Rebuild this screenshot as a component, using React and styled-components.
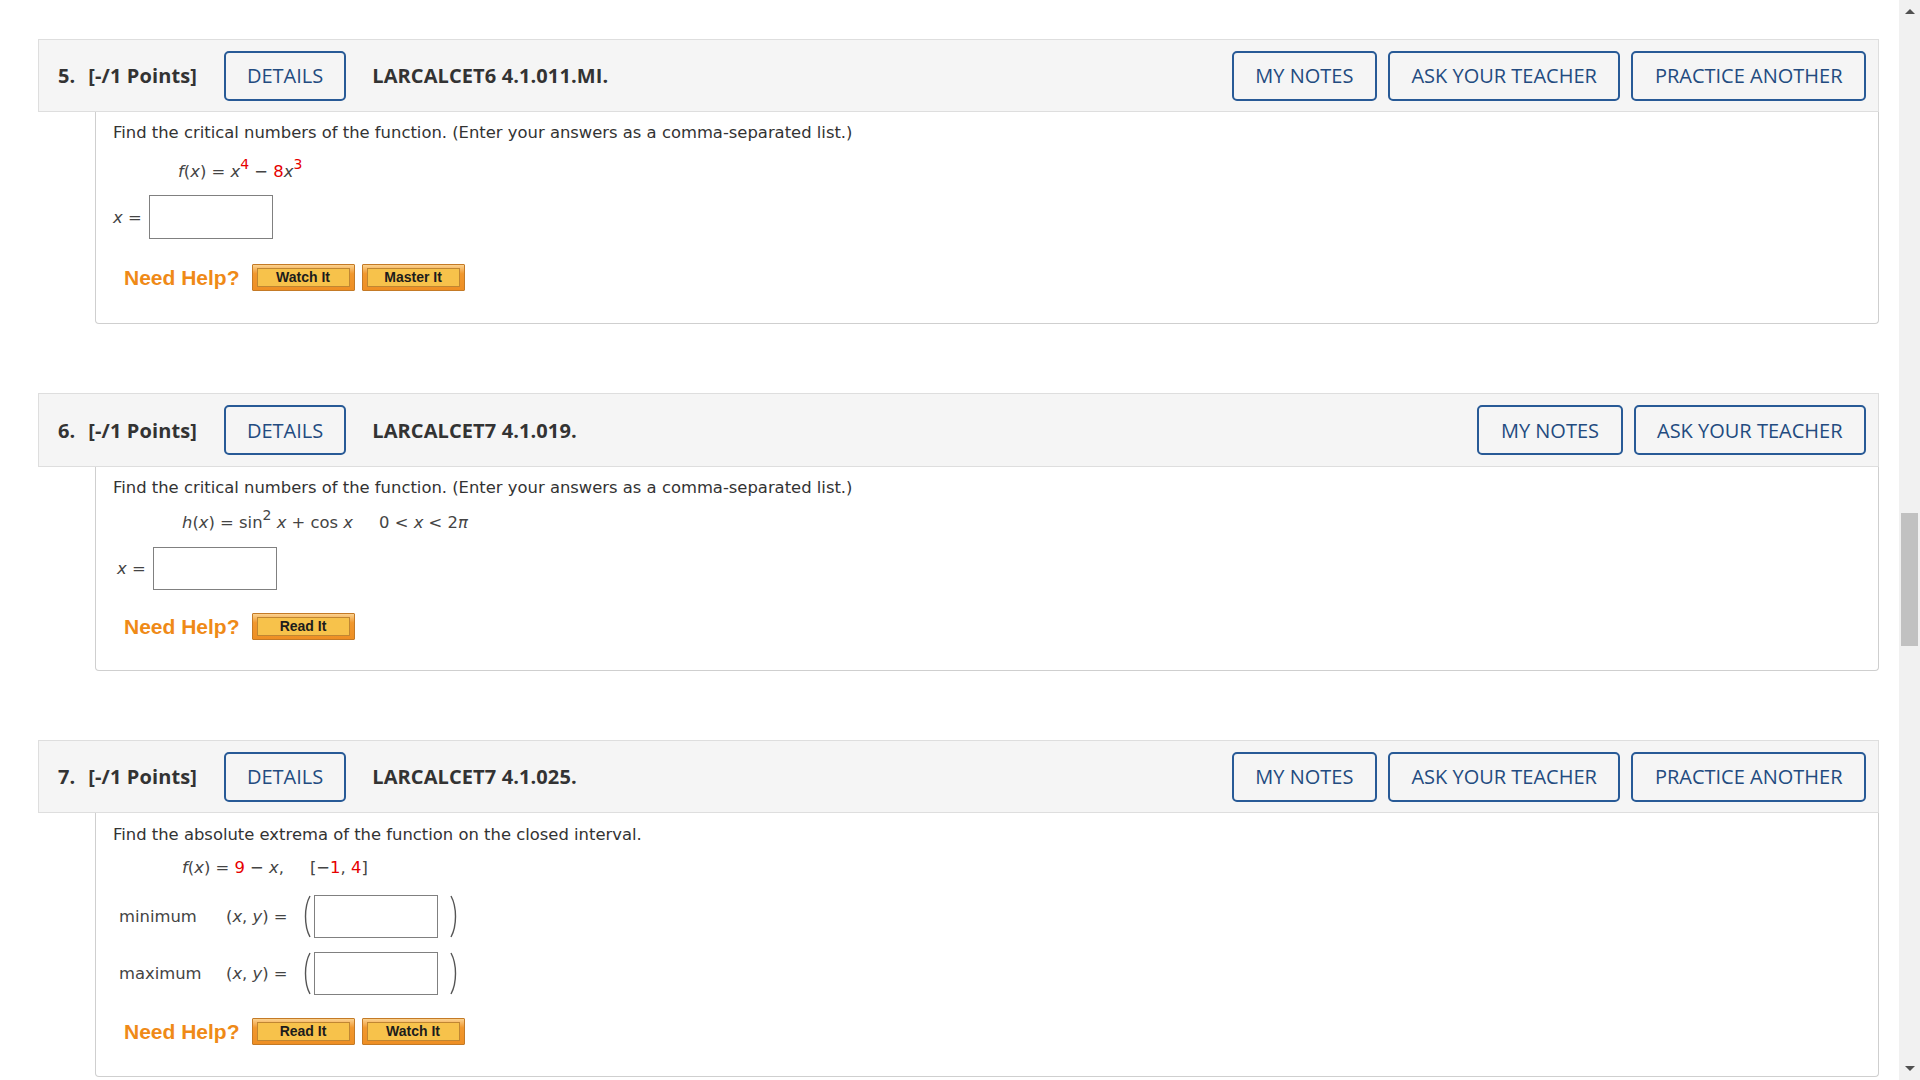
import React from 'react';
import styled, { createGlobalStyle } from 'styled-components';

const GlobalStyle = createGlobalStyle`
  html, body {
    margin: 0;
    padding: 0;
    height: 100%;
    overflow: hidden;
    background: #fff;
  }
  #root { height: 100%; }
`;

const Screen = styled.div`
  display: flex;
  height: 1080px;
  overflow: hidden;
`;

const Main = styled.div`
  flex: 1;
  display: flex;
  flex-direction: column;
  gap: 69px;
  padding: 39px 20px 0 38px;
  min-width: 0;
`;

const Scrollbar = styled.div`
  width: 21px;
  flex: none;
  display: flex;
  flex-direction: column;
  align-items: center;
  background: #f1f1f1;
`;

const Arrow = styled.div`
  width: 0;
  height: 0;
  border-left: 5px solid transparent;
  border-right: 5px solid transparent;
  ${p => (p.down
    ? 'border-top: 5px solid #505050; margin-top: auto; margin-bottom: 9px;'
    : 'border-bottom: 5px solid #505050; margin-top: 9px;')}
`;

const Thumb = styled.div`
  width: 17px;
  height: 133px;
  margin-top: 499px;
  background: #c1c1c1;
`;

const QuestionWrap = styled.section`
  display: flex;
  flex-direction: column;
`;

const Header = styled.div`
  display: flex;
  align-items: center;
  height: ${p => p.tall ? 74 : 73}px;
  box-sizing: border-box;
  padding: 0 12px 0 19px;
  background: #f5f5f5;
  border: 1px solid #dedede;
  font-family: "Open Sans", "Liberation Sans", sans-serif;
  font-size: 20px;
  color: #333;
`;

const Points = styled.div`
  font-weight: 700;
  white-space: nowrap;
  letter-spacing: 0.1px;
  span { margin-right: 13px; }
`;

const Code = styled.div`
  font-weight: 700;
  margin-left: 26px;
  white-space: nowrap;
  letter-spacing: 0.1px;
`;

const OutlineButton = styled.button`
  height: 50px;
  box-sizing: border-box;
  padding: 0 ${p => p.spaced ? 21 : 21.5}px;
  margin-left: ${p => p.spaced ? 27 : 0}px;
  background: transparent;
  border: 2px solid #285a96;
  border-radius: 5px;
  font-family: "Open Sans", "Liberation Sans", sans-serif;
  font-size: 20px;
  color: #234b80;
  white-space: nowrap;
  cursor: pointer;
`;

const Actions = styled.div`
  margin-left: auto;
  display: flex;
  gap: 11px;
`;

const Body = styled.div`
  margin-left: 57px;
  padding: ${p => p.top}px 17px ${p => p.bottom}px;
  border: 1px solid #cfcfcf;
  border-top: none;
  border-radius: 0 0 4px 4px;
  font-family: "DejaVu Sans", Verdana, sans-serif;
  font-size: 16.4px;
  color: #333;
`;

const Prompt = styled.div`
  line-height: 20px;
`;

const Formula = styled.div`
  margin-top: ${p => p.gap}px;
  margin-left: ${p => p.indent}px;
  height: 20px;
  line-height: 20px;
  color: #444;
  i { font-style: italic; }
  sup {
    font-size: 14px;
    line-height: 0;
    vertical-align: 8px;
  }
`;

const Red = styled.span`
  color: #e60000;
`;

const Gap = styled.span`
  display: inline-block;
  width: ${p => p.w}px;
`;

const AnswerRow = styled.div`
  display: flex;
  align-items: center;
  margin-top: ${p => p.gap}px;
  margin-left: ${p => p.indent || 0}px;
  color: #444;
`;

const VarLabel = styled.span`
  margin-right: 7px;
`;

const AnswerBox = styled.input`
  width: 124px;
  height: ${p => p.h || 44}px;
  box-sizing: border-box;
  border: 1px solid #808080;
  background: #fff;
  margin: 0;
  padding: 0 4px;
`;

const RowLabel = styled.span`
  width: 107px;
  flex: none;
`;

const PairLabel = styled.span`
  width: 76px;
  flex: none;
`;

const Paren = styled.svg`
  flex: none;
  display: block;
  margin: ${p => p.right ? '0 0 0 11px' : '0 2px 0 0'};
`;

const HelpRow = styled.div`
  display: flex;
  align-items: center;
  margin-top: ${p => p.gap}px;
  margin-left: 11px;
  gap: 7px;
`;

const NeedHelp = styled.span`
  font-family: "Liberation Sans", Arial, sans-serif;
  font-weight: 700;
  font-size: 21px;
  color: #ef8a17;
  margin-right: 5px;
`;

const HelpButton = styled.button`
  width: 103px;
  height: 27px;
  box-sizing: border-box;
  padding: 3px 4px;
  border: 1px solid #c47a26;
  border-radius: 1px;
  background: linear-gradient(#fbd290, #f1982e 35%, #ee8f24);
  cursor: pointer;
  span {
    display: block;
    height: 100%;
    box-sizing: border-box;
    border: 1px solid #c08632;
    background: #f7c24b;
    font-family: "Liberation Sans", Arial, sans-serif;
    font-weight: 700;
    font-size: 14px;
    line-height: 17px;
    color: #1c1c1c;
  }
`;

const BigParen = ({ right }) => (
  <Paren right={right} width="10" height="43" viewBox="0 0 10 43">
    <path
      d={right ? 'M2 1 C8 12 8 31 2 42' : 'M8 1 C2 12 2 31 8 42'}
      stroke="#555"
      strokeWidth="1.4"
      fill="none"
    />
  </Paren>
);

const Help = ({ gap, items }) => (
  <HelpRow gap={gap}>
    <NeedHelp>Need Help?</NeedHelp>
    {items.map(label => (
      <HelpButton key={label}><span>{label}</span></HelpButton>
    ))}
  </HelpRow>
);

const Question = ({ num, code, practice, tall, top, bottom, children }) => (
  <QuestionWrap>
    <Header tall={tall}>
      <Points><span>{num}.</span>[-/1 Points]</Points>
      <OutlineButton spaced>DETAILS</OutlineButton>
      <Code>{code}</Code>
      <Actions>
        <OutlineButton>MY NOTES</OutlineButton>
        <OutlineButton>ASK YOUR TEACHER</OutlineButton>
        {practice && <OutlineButton>PRACTICE ANOTHER</OutlineButton>}
      </Actions>
    </Header>
    <Body top={top} bottom={bottom}>{children}</Body>
  </QuestionWrap>
);

const ExtremaRow = ({ label, gap }) => (
  <AnswerRow gap={gap} indent={6}>
    <RowLabel>{label}</RowLabel>
    <PairLabel>(<i>x</i>, <i>y</i>) =</PairLabel>
    <BigParen />
    <AnswerBox h={43} />
    <BigParen right />
  </AnswerRow>
);

export default function App() {
  return (
    <Screen>
      <GlobalStyle />
      <Main>
        <Question num={5} code="LARCALCET6 4.1.011.MI." practice top={11} bottom={32}>
          <Prompt>Find the critical numbers of the function. (Enter your answers as a comma-separated list.)</Prompt>
          <Formula gap={19} indent={65}>
            <i>f</i>(<i>x</i>) = <i>x</i><sup><Red>4</Red></sup> − <Red>8</Red><i>x</i><sup><Red>3</Red></sup>
          </Formula>
          <AnswerRow gap={13}>
            <VarLabel><i>x</i> =</VarLabel>
            <AnswerBox />
          </AnswerRow>
          <Help gap={25} items={['Watch It', 'Master It']} />
        </Question>

        <Question num={6} code="LARCALCET7 4.1.019." tall top={11} bottom={30}>
          <Prompt>Find the critical numbers of the function. (Enter your answers as a comma-separated list.)</Prompt>
          <Formula gap={15} indent={69}>
            <i>h</i>(<i>x</i>) = sin<sup>2</sup> <i>x</i> + cos <i>x</i><Gap w={26} />0 &lt; <i>x</i> &lt; 2<i>π</i>
          </Formula>
          <AnswerRow gap={14} indent={4}>
            <VarLabel><i>x</i> =</VarLabel>
            <AnswerBox h={43} />
          </AnswerRow>
          <Help gap={23} items={['Read It']} />
        </Question>

        <Question num={7} code="LARCALCET7 4.1.025." practice top={12} bottom={31}>
          <Prompt>Find the absolute extrema of the function on the closed interval.</Prompt>
          <Formula gap={13} indent={69}>
            <i>f</i>(<i>x</i>) = <Red>9</Red> − <i>x</i>,<Gap w={26} />[−<Red>1</Red>, <Red>4</Red>]
          </Formula>
          <ExtremaRow label="minimum" gap={17} />
          <ExtremaRow label="maximum" gap={14} />
          <Help gap={23} items={['Read It', 'Watch It']} />
        </Question>
      </Main>
      <Scrollbar>
        <Arrow />
        <Thumb />
        <Arrow down />
      </Scrollbar>
    </Screen>
  );
}
